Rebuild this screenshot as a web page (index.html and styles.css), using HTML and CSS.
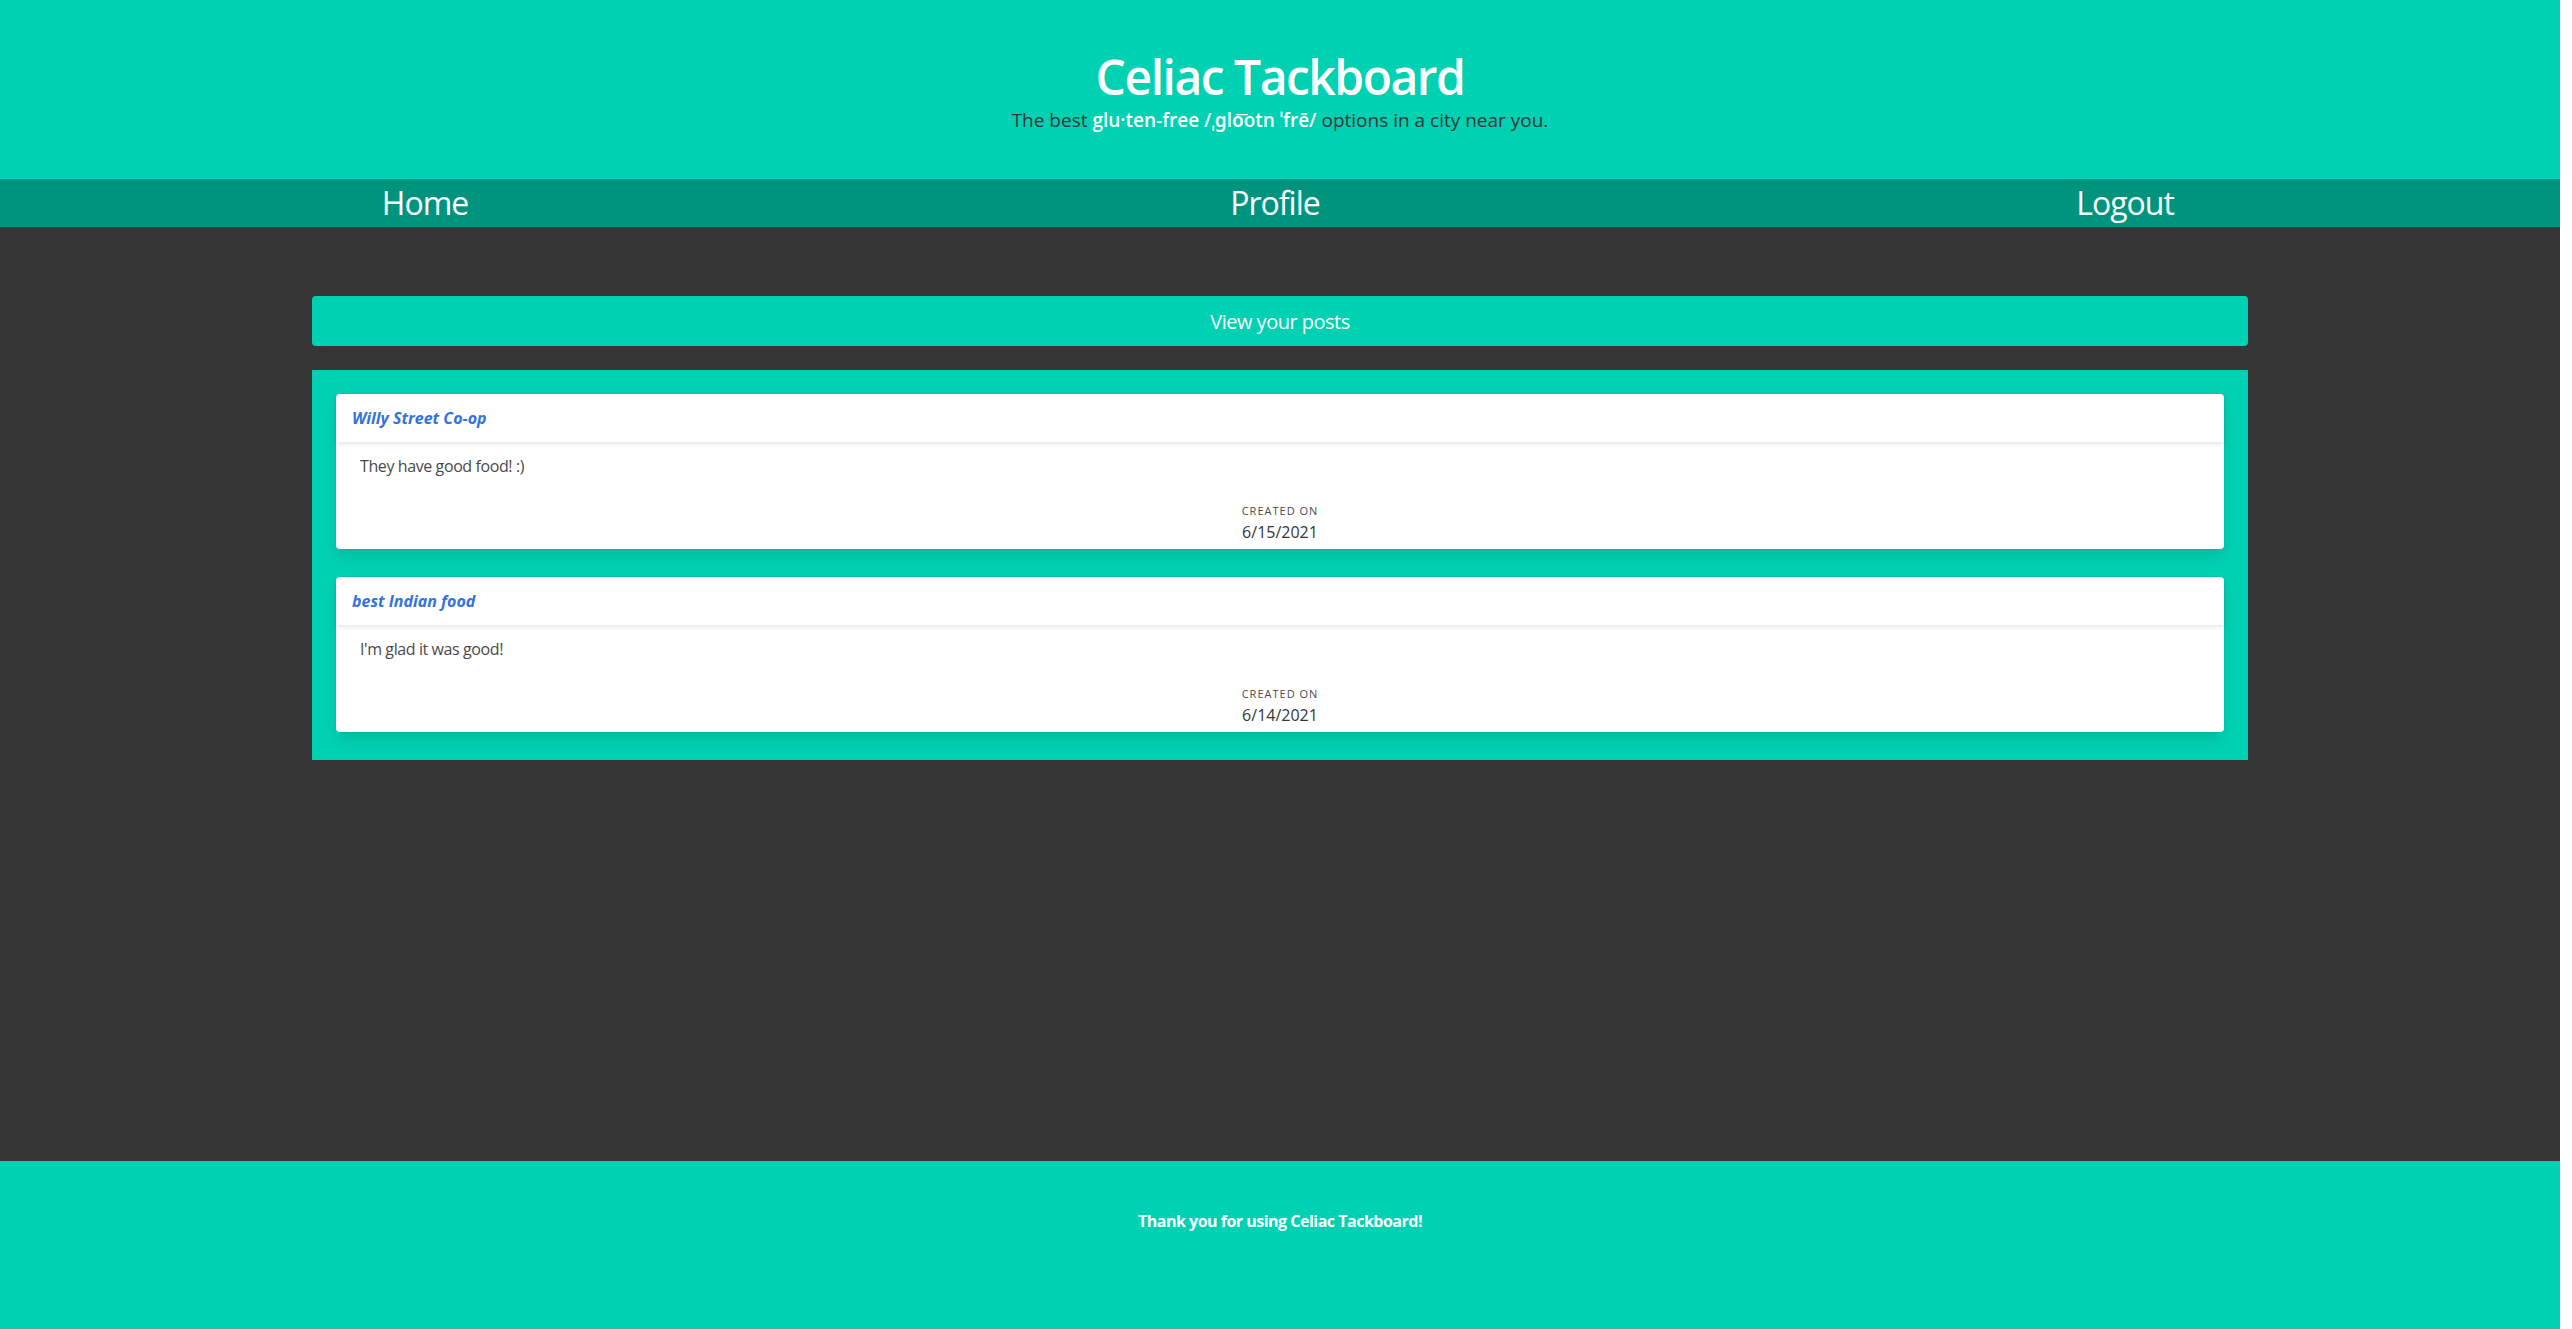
FILE: index.html
```html
<!DOCTYPE html>
<html lang="en">
<head>
<meta charset="utf-8">
<title>Celiac Tackboard</title>
<link rel="stylesheet" href="styles.css">
</head>
<body>
<div class="page">
  <header class="hero">
    <h1 class="title">Celiac Tackboard</h1>
    <p class="subtitle">The best <strong>glu·ten-free /ˌɡlo͞otn ˈfrē/</strong> options in a city near you.</p>
  </header>
  <nav class="navbar">
    <a class="nav-link" href="#">Home</a>
    <a class="nav-link" href="#">Profile</a>
    <a class="nav-link" href="#">Logout</a>
  </nav>
  <main class="main">
    <div class="wrap">
      <button class="view-btn" type="button">View your posts</button>
      <section class="posts">
        <article class="card">
          <header class="card-header"><a class="card-title" href="#">Willy Street Co-op</a></header>
          <div class="card-content">
            <p class="body-text">They have good food! :)</p>
            <div class="level">
              <p class="heading">Created On</p>
              <p class="date">6/15/2021</p>
            </div>
          </div>
        </article>
        <article class="card">
          <header class="card-header"><a class="card-title" href="#">best Indian food</a></header>
          <div class="card-content">
            <p class="body-text">I'm glad it was good!</p>
            <div class="level">
              <p class="heading">Created On</p>
              <p class="date">6/14/2021</p>
            </div>
          </div>
        </article>
      </section>
    </div>
  </main>
  <footer class="footer">
    <p class="footer-text">Thank you for using Celiac Tackboard!</p>
  </footer>
</div>
</body>
</html>
```

FILE: styles.css
```css
* { box-sizing: border-box; }
html { background: #ffffff; }
body {
  margin: 0;
  font-family: "Open Sans", "Noto Sans", "Liberation Sans", sans-serif;
  color: #4a4a4a;
}
.page {
  width: 2560px;
  display: flex;
  flex-direction: column;
}
.hero {
  background: #00d1b2;
  height: 179px;
  padding-top: 50px;
  text-align: center;
}
.title {
  margin: 0;
  font-size: 48px;
  line-height: 54px;
  font-weight: 600;
  color: #ffffff;
  letter-spacing: -1.5px;
}
.subtitle {
  margin: 4px 0 0;
  font-size: 19px;
  line-height: 24px;
  color: #363636;
  letter-spacing: 0;
}
.subtitle strong { color: #ffffff; font-weight: 600; }
.navbar {
  background: #00947e;
  height: 48px;
  padding-right: 10px;
  display: grid;
  grid-template-columns: repeat(3, 1fr);
}
.nav-link {
  text-align: center;
  color: #ffffff;
  text-decoration: none;
  font-size: 32px;
  line-height: 48px;
  letter-spacing: -1px;
}
.main {
  background: #363636;
  height: 934px;
  padding-top: 69px;
}
.wrap {
  width: 1936px;
  margin: 0 auto;
  display: flex;
  flex-direction: column;
  gap: 24px;
}
.view-btn {
  height: 50px;
  border: none;
  border-radius: 4px;
  background: #00d1b2;
  color: #ffffff;
  font-family: inherit;
  font-size: 20px;
  letter-spacing: -0.5px;
  cursor: pointer;
}
.posts {
  background: #00d1b2;
  padding: 24px 24px 0;
  display: flex;
  flex-direction: column;
}
.card {
  background: #ffffff;
  border-radius: 4px;
  margin-bottom: 28px;
  box-shadow: 0 8px 16px -2px rgba(10,10,10,0.12), 0 0 0 1px rgba(10,10,10,0.02);
}
.card-header {
  height: 48px;
  padding: 12px 16px;
  box-shadow: 0 2px 4px rgba(10,10,10,0.1);
}
.card-title {
  color: #3273dc;
  font-weight: 700;
  font-style: italic;
  font-size: 16px;
  line-height: 24px;
  text-decoration: none;
}
.card-content {
  padding: 12px 24px 5px;
}
.body-text {
  margin: 0;
  font-size: 16px;
  line-height: 24px;
  color: #4a4a4a;
  letter-spacing: -0.4px;
}
.level {
  margin-top: 25px;
  text-align: center;
}
.heading {
  margin: 0 0 2px;
  font-size: 11px;
  line-height: 16px;
  letter-spacing: 1px;
  text-transform: uppercase;
  color: #4a4a4a;
}
.date {
  margin: 0;
  font-size: 16px;
  line-height: 23px;
  font-weight: 500;
  color: #363636;
}
.footer {
  background: #00d1b2;
  padding: 48px 24px 96px;
  text-align: center;
}
.footer-text {
  margin: 0;
  font-size: 16px;
  line-height: 24px;
  font-weight: 700;
  color: #ffffff;
  letter-spacing: -0.5px;
}
```
